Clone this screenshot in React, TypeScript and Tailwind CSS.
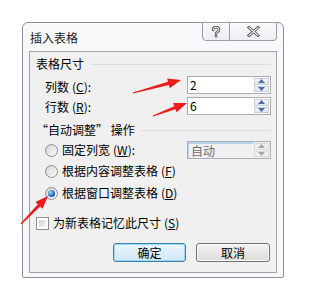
import React from 'react';

type Pt = [number, number];

// red annotation arrows drawn over the dialog
function arrowPoints(tail: Pt, tip: Pt, headLen = 13, headHalf = 5, shaftHalf = 1.6) {
  const dx = tip[0] - tail[0];
  const dy = tip[1] - tail[1];
  const len = Math.hypot(dx, dy);
  const ux = dx / len;
  const uy = dy / len;
  const px = -uy;
  const py = ux;
  const bx = tip[0] - ux * headLen;
  const by = tip[1] - uy * headLen;
  const pts: Pt[] = [
    [tail[0] + px * 0.6, tail[1] + py * 0.6],
    [bx + px * shaftHalf, by + py * shaftHalf],
    [bx + px * headHalf, by + py * headHalf],
    tip,
    [bx - px * headHalf, by - py * headHalf],
    [bx - px * shaftHalf, by - py * shaftHalf],
    [tail[0] - px * 0.6, tail[1] - py * 0.6],
  ];
  return pts.map(p => p.join(',')).join(' ');
}

const arrows: [Pt, Pt][] = [
  [[133, 93], [181, 80]],
  [[153, 116], [187, 103]],
  [[21, 224], [48, 196]],
];

const Key = ({ k }: { k: string }) => (
  <span className="ml-[3px]">
    (<span className="underline underline-offset-1">{k}</span>)
  </span>
);

const Spinner = ({ disabled = false }: { disabled?: boolean }) => {
  const arrow = disabled ? '#a7a7a7' : '#4b6cb0';
  return (
    <div className="w-[17px] h-full flex flex-col gap-[1px] p-[1px]">
      {[0, 1].map(i => (
        <div
          key={i}
          className={`flex-1 flex items-center justify-center border ${
            disabled ? 'border-[#d9d9d9] bg-[#f0f0f0]' : 'border-[#c7cfdb] bg-gradient-to-b from-[#f4f6f9] to-[#dfe4ec]'
          }`}
        >
          <svg width="7" height="4" viewBox="0 0 7 4">
            {i === 0 ? <polygon points="3.5,0 7,4 0,4" fill={arrow} /> : <polygon points="0,0 7,0 3.5,4" fill={arrow} />}
          </svg>
        </div>
      ))}
    </div>
  );
};

const NumberBox = ({ value }: { value: string }) => (
  <div className="w-[84px] h-[18px] border border-[#abadb3] bg-white flex">
    <div className="flex-1 pl-[2px] leading-[16px] text-[12px] text-black">{value}</div>
    <Spinner />
  </div>
);

const Radio = ({ checked = false }: { checked?: boolean }) => (
  <div className="w-[13px] h-[13px] rounded-full border border-[#8e8f8f] bg-gradient-to-br from-[#d4d4d4] to-[#fbfbfb] flex items-center justify-center shrink-0">
    {checked && (
      <div className="w-[7px] h-[7px] rounded-full bg-[radial-gradient(circle_at_35%_35%,#9fd3ff,#1f69b8_60%,#0d3f7d)]" />
    )}
  </div>
);

const GroupHeader = ({ children }: { children: React.ReactNode }) => (
  <div className="flex items-center h-[16px]">
    <span className="whitespace-nowrap">{children}</span>
    <div className="flex-1 h-[1px] bg-[#d5dfe5] ml-[6px]" />
  </div>
);

export default function App() {
  return (
    <div className="relative w-[312px] h-[281px] bg-white overflow-hidden font-['Noto_Sans_CJK_SC','Noto_Sans',sans-serif] text-[12px] leading-[16px] text-black">
      <div className="ml-[22px] mt-[22px] w-[262px] h-[256px] rounded-t-[6px] rounded-b-[2px] border border-[#8c9096] bg-[#f7f8fa] flex flex-col px-[6px] pb-[4px]">
        <div className="h-[28px] flex items-start justify-between">
          <span className="mt-[7px] ml-[1px] text-[12px] text-[#1b1b1b]">插入表格</span>
          <div className="flex -mt-[1px]">
            <div className="w-[28px] h-[19px] border border-[#9a9ea4] rounded-bl-[4px] bg-gradient-to-b from-[#fbfbfc] to-[#eceef1] flex items-center justify-center">
              <svg width="10" height="12" viewBox="0 0 10 12">
                <path d="M2 4 Q2 1.2 5 1.2 Q8 1.2 8 3.8 Q8 5.4 6 6.2 Q5 6.7 5 8" fill="none" stroke="#555" strokeWidth="2.6" strokeLinecap="round" />
                <path d="M2 4 Q2 1.2 5 1.2 Q8 1.2 8 3.8 Q8 5.4 6 6.2 Q5 6.7 5 8" fill="none" stroke="#f4f5f7" strokeWidth="1" strokeLinecap="round" />
                <circle cx="5" cy="10.3" r="1.3" fill="#555" />
                <circle cx="5" cy="10.3" r="0.5" fill="#f4f5f7" />
              </svg>
            </div>
            <div className="w-[47px] h-[19px] border border-l-0 border-[#9a9ea4] rounded-br-[4px] bg-gradient-to-b from-[#fbfbfc] to-[#eceef1] flex items-center justify-center">
              <svg width="13" height="11" viewBox="0 0 13 11">
                <path d="M2 1.5 L11 9.5 M11 1.5 L2 9.5" stroke="#555" strokeWidth="3" strokeLinecap="square" />
                <path d="M2 1.5 L11 9.5 M11 1.5 L2 9.5" stroke="#f4f5f7" strokeWidth="1.1" strokeLinecap="square" />
              </svg>
            </div>
          </div>
        </div>

        <div className="flex-1 border border-[#a0a4aa] bg-[#f0f0f0] flex flex-col pl-[6px] pr-[5px] pt-[4px]">
          <GroupHeader>表格尺寸</GroupHeader>

          <div className="mt-[4px] flex items-center justify-between h-[18px]">
            <span className="ml-[9px] mt-[3px]">列数<Key k="C" />:</span>
            <NumberBox value="2" />
          </div>
          <div className="mt-[3px] flex items-center justify-between h-[18px]">
            <span className="ml-[9px] mt-[1px]">行数<Key k="R" />:</span>
            <NumberBox value="6" />
          </div>

          <div className="mt-[7px]">
            <GroupHeader>“自动调整” 操作</GroupHeader>
          </div>

          <div className="mt-[3px] flex items-center justify-between h-[18px]">
            <div className="ml-[9px] flex items-center gap-[4px]">
              <Radio />
              <span>固定列宽<Key k="W" />:</span>
            </div>
            <div className="w-[84px] h-[18px] border border-[#abadb3] bg-[#f0f0f0] flex">
              <div className="flex-1 border-t-[2px] border-l border-[#b6d2ef] pl-[2px] leading-[14px] text-[#6d6d6d]">自动</div>
              <Spinner disabled />
            </div>
          </div>

          <div className="mt-[3px] ml-[9px] flex items-center gap-[4px] h-[18px]">
            <Radio />
            <span>根据内容调整表格<Key k="F" /></span>
          </div>
          <div className="mt-[4px] ml-[9px] flex items-center gap-[4px] h-[18px]">
            <Radio checked />
            <span>根据窗口调整表格<Key k="D" /></span>
          </div>

          <div className="mt-[12px] flex items-center gap-[4px] h-[18px]">
            <div className="w-[13px] h-[13px] border border-[#8e8f8f] bg-white p-[2px]">
              <div className="w-full h-full bg-gradient-to-br from-[#cbcfd5] to-[#f6f6f6]" />
            </div>
            <span>为新表格记忆此尺寸<Key k="S" /></span>
          </div>

          <div className="mt-[11px] flex justify-end gap-[10px] pr-[1px]">
            <div className="w-[73px] h-[19px] rounded-[3px] border border-[#3c7fb1] bg-gradient-to-b from-[#eaf6fd] to-[#d3e7f5] shadow-[inset_0_0_0_1px_#9ad8f7] flex items-center justify-center">
              确定
            </div>
            <div className="w-[74px] h-[19px] rounded-[3px] border border-[#707070] bg-gradient-to-b from-[#f2f2f2] to-[#dcdcdc] shadow-[inset_0_0_0_1px_#fbfbfb] flex items-center justify-center">
              取消
            </div>
          </div>
        </div>
      </div>

      <svg className="absolute inset-0 pointer-events-none" width="312" height="281">
        {arrows.map(([a, b], i) => (
          <polygon key={i} points={arrowPoints(a, b)} fill="#ec1c1c" />
        ))}
      </svg>
    </div>
  );
}
